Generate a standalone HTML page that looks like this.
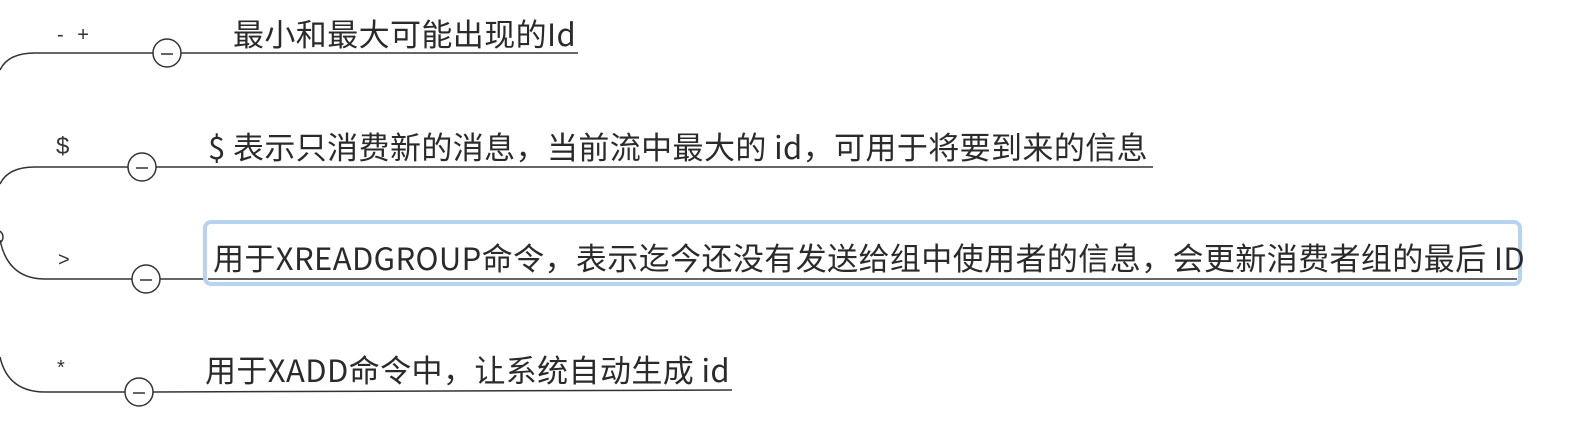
<!DOCTYPE html><html><head><meta charset="utf-8"><style>
body{margin:0;width:1576px;height:442px;background:#fff;overflow:hidden;position:relative;font-family:"Liberation Sans","Noto Sans CJK SC",sans-serif;color:#222}
.t{position:absolute;font-size:31px;letter-spacing:0.4px;white-space:nowrap;line-height:1;color:#2a2a2a;font-family:"Noto Sans CJK SC","Liberation Sans",sans-serif}
.l{position:absolute;font-size:20px;color:#333;line-height:1}
.box{position:absolute;left:203px;top:220px;width:1311px;height:58px;border:4px solid #b7d3f2;border-radius:8px;background:#fff}
</style></head><body>
<svg width="1576" height="442" style="position:absolute;left:0;top:0">
<g fill="none" stroke="#333" stroke-width="1.5">
<path d="M0 70 Q8 53 35 53 L153 53"/><path d="M181 53 L578 53"/>
<path d="M0 184 Q8 167 35 167 L128 167"/><path d="M156 167 L1153 167"/>
<path d="M0 240 Q8 279 45 279 L132 279"/><path d="M160 279 L1517 279"/>
<path d="M0 357 Q8 392 45 392 L125 392"/><path d="M153 392 L732 390"/>
<circle cx="167" cy="53" r="14" fill="#fff"/><path d="M161 54h12"/>
<circle cx="142" cy="167" r="14" fill="#fff"/><path d="M136 168h12"/>
<circle cx="146" cy="279" r="14" fill="#fff"/><path d="M140 280h12"/>
<circle cx="139" cy="392" r="14" fill="#fff"/><path d="M133 393h12"/>
<circle cx="-4" cy="237" r="7"/>
</g></svg>
<div class="l" style="left:57px;top:25px;word-spacing:8px">- +</div>
<div class="l" style="left:56px;top:135px;font-size:24px">$</div>
<div class="l" style="left:58px;top:250px">&gt;</div>
<div class="l" style="left:57px;top:358px">*</div>
<div class="t" style="left:233px;top:17px">最小和最大可能出现的Id</div>
<div class="t" style="left:208px;top:130px">$ 表示只消费新的消息，当前流中最大的 id，可用于将要到来的信息</div>
<div class="box"></div>
<svg width="1576" height="442" style="position:absolute;left:0;top:0"><path d="M208 279 L1517 279" stroke="#333" stroke-width="1.5"/></svg>
<div class="t" style="left:213px;top:241px">用于XREADGROUP命令，表示迄今还没有发送给组中使用者的信息，会更新消费者组的最后 ID</div>
<div class="t" style="left:205px;top:353px">用于XADD命令中，让系统自动生成 id</div>
</body></html>
